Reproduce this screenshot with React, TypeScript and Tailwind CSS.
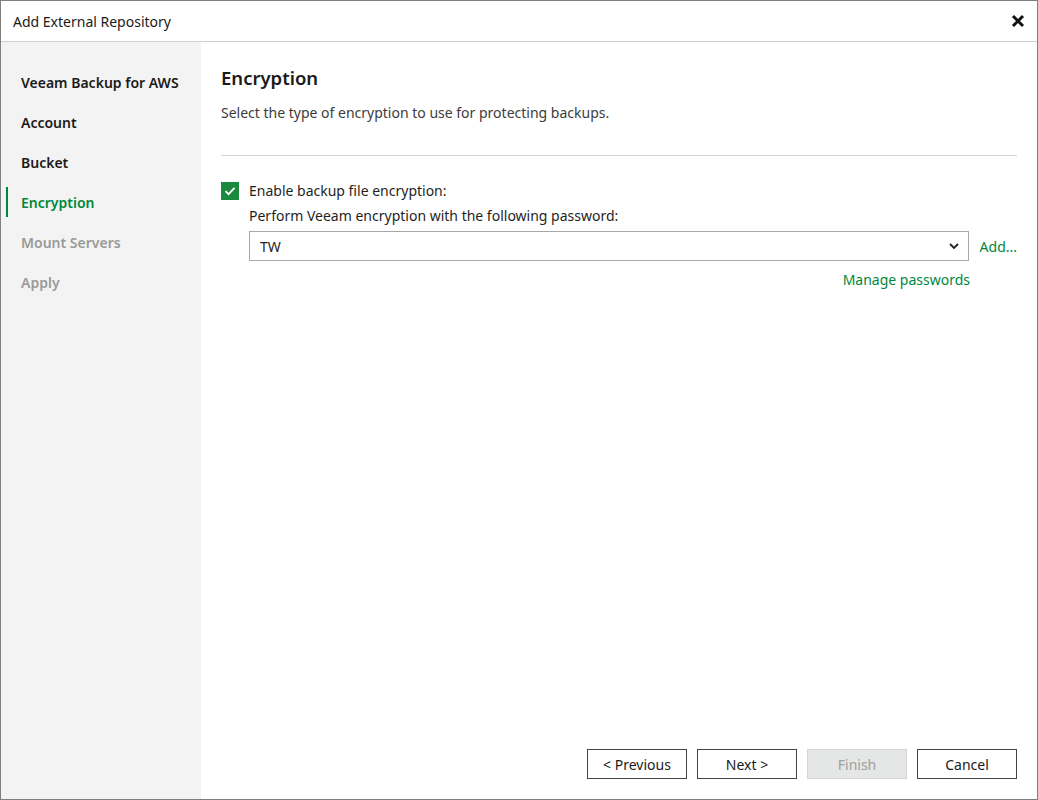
import { useState } from "react";

const steps = [
  { label: "Veeam Backup for AWS", state: "done" },
  { label: "Account", state: "done" },
  { label: "Bucket", state: "done" },
  { label: "Encryption", state: "active" },
  { label: "Mount Servers", state: "todo" },
  { label: "Apply", state: "todo" },
];

function WizardButton({ label, disabled }: { label: string; disabled?: boolean }) {
  return (
    <button
      disabled={disabled}
      className={`w-[100px] h-[30px] text-[14px] border ${
        disabled
          ? "bg-[#e5e6e6] border-[#d4d5d5] text-[#a0a0a0]"
          : "bg-white border-[#444] text-[#1a1a1a]"
      }`}
    >
      {label}
    </button>
  );
}

export default function App() {
  const [enabled, setEnabled] = useState(true);

  return (
    <div
      className="w-[1038px] h-[800px] border border-[#7f7f7f] bg-white flex flex-col text-[#1f1f1f]"
      style={{ fontFamily: '"Noto Sans", "Open Sans", sans-serif' }}
    >
      {/* title bar */}
      <div className="h-[41px] shrink-0 flex items-center justify-between pl-3 pr-3 border-b border-[#cfcfcf]">
        <span className="text-[14px] text-[#1a1a1a]">Add External Repository</span>
        <svg width="14" height="14" viewBox="0 0 14 14">
          <path d="M2 2 L12 12 M12 2 L2 12" stroke="#111" strokeWidth="3" strokeLinecap="butt" />
        </svg>
      </div>

      <div className="flex flex-1 min-h-0">
        {/* steps */}
        <div className="w-[200px] shrink-0 bg-[#f2f3f2] pt-[20px]">
          {steps.map((s) => (
            <div key={s.label} className="relative h-[40px] flex items-center pl-5">
              {s.state === "active" && (
                <span className="absolute left-[5px] top-[5px] h-[30px] w-[2px] bg-[#00883a]" />
              )}
              <span
                className={`text-[14px] font-semibold ${
                  s.state === "active"
                    ? "text-[#00883a]"
                    : s.state === "todo"
                    ? "text-[#9a9a9a]"
                    : "text-[#1a1a1a]"
                }`}
              >
                {s.label}
              </span>
            </div>
          ))}
        </div>

        {/* content */}
        <div className="flex-1 flex flex-col pl-5 pr-5 pt-[23px] pb-5">
          <h1 className="text-[18.5px] font-semibold text-[#1a1a1a] leading-[26px]">Encryption</h1>
          <p className="mt-[12px] text-[14px] leading-[20px] text-[#3c3c3c]">
            Select the type of encryption to use for protecting backups.
          </p>
          <div className="mt-[32px] border-t border-[#d6d6d6]" />

          <label className="mt-[25px] flex items-center gap-[10px] cursor-pointer">
            <span
              onClick={() => setEnabled(!enabled)}
              className={`w-[18px] h-[18px] flex items-center justify-center ${
                enabled ? "bg-[#1b8a3e]" : "border border-[#666] bg-white"
              }`}
            >
              {enabled && (
                <svg width="12" height="12" viewBox="0 0 12 12">
                  <path d="M1.5 6.2 L4.6 9.2 L10.5 2.8" fill="none" stroke="white" strokeWidth="1.8" />
                </svg>
              )}
            </span>
            <span className="text-[14px] leading-[20px]">Enable backup file encryption:</span>
          </label>

          <div className="pl-[28px]">
            <div className="mt-[5px] text-[14px] leading-[20px]">
              Perform Veeam encryption with the following password:
            </div>
            <div className="mt-[5px] flex items-center gap-[11px]">
              <div className="flex-1 h-[30px] border border-[#a8a8a8] flex items-center justify-between pl-[10px] pr-[8px]">
                <span className="text-[14px]">TW</span>
                <svg width="12" height="12" viewBox="0 0 12 12">
                  <path d="M2 4 L6 8 L10 4" fill="none" stroke="#222" strokeWidth="1.8" />
                </svg>
              </div>
              <span className="text-[14px] text-[#00883a]">Add...</span>
            </div>
            <div className="mt-[9px] pr-[47px] flex justify-end">
              <span className="text-[14px] leading-[20px] text-[#00883a]">Manage passwords</span>
            </div>
          </div>

          <div className="mt-auto flex justify-end gap-[10px]">
            <WizardButton label="< Previous" />
            <WizardButton label="Next >" />
            <WizardButton label="Finish" disabled />
            <WizardButton label="Cancel" />
          </div>
        </div>
      </div>
    </div>
  );
}
